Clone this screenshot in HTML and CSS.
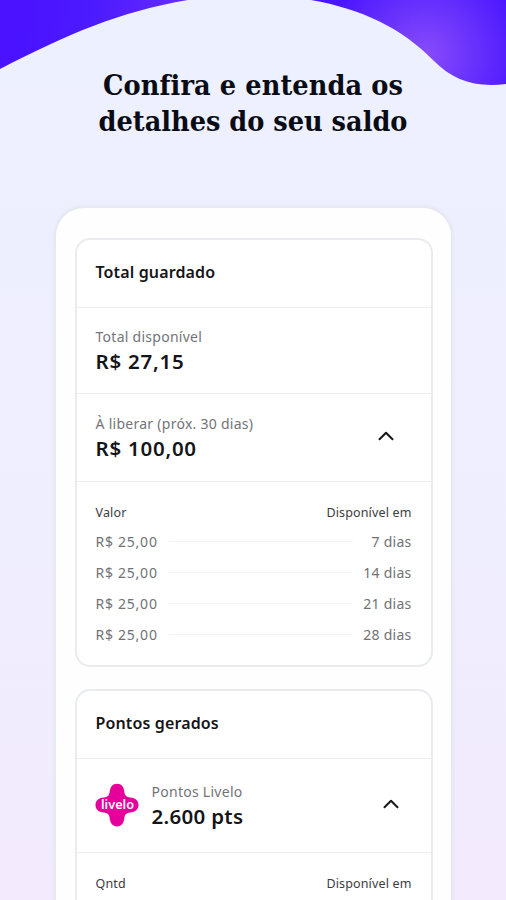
FILE: index.html
```html
<!DOCTYPE html>
<html lang="pt-BR">
<head>
<meta charset="utf-8">
<title>Detalhes do saldo</title>
<link rel="stylesheet" href="styles.css">
</head>
<body>
<svg class="wave" viewBox="0 0 506 90" aria-hidden="true">
  <defs>
    <linearGradient id="left" gradientUnits="userSpaceOnUse" x1="20" y1="0" x2="188" y2="30">
      <stop offset="0" stop-color="#4a12ff"/><stop offset=".45" stop-color="#4c1bff"/><stop offset="1" stop-color="#692dff"/>
    </linearGradient>
    <radialGradient id="right" gradientUnits="userSpaceOnUse" cx="425" cy="55" r="100">
      <stop offset="0" stop-color="#884cfb"/><stop offset=".45" stop-color="#6b34fc"/><stop offset="1" stop-color="#4916ff"/>
    </radialGradient>
  </defs>
  <path fill="url(#left)" d="M0 0H188C118 12 68 34 0 69Z"/>
  <path fill="url(#right)" d="M311 0H506V84C475 88 453 80 434 61C402 28 362 9 311 0Z"/>
</svg>
<h1 class="title"><span class="title-a">Confira e entenda os</span><br><span class="title-b">detalhes do seu saldo</span></h1>
<main class="panel">
  <section class="card">
    <h2 class="card-head">Total guardado</h2>
    <div class="row available">
      <div><p class="label">Total disponível</p><p class="amount">R$ 27,15</p></div>
    </div>
    <div class="row pending">
      <div><p class="label">À liberar (próx. 30 dias)</p><p class="amount">R$ 100,00</p></div>
      <svg class="chevron" viewBox="0 0 16 10"><path d="M1.500 8.200 8 1.800l6.500 6.400"/></svg>
    </div>
    <div class="table">
      <div class="thead"><span>Valor</span><span>Disponível em</span></div>
      <div class="item"><span class="value">R$ 25,00</span><i></i><span class="days">7 dias</span></div>
      <div class="item"><span class="value">R$ 25,00</span><i></i><span class="days">14 dias</span></div>
      <div class="item"><span class="value">R$ 25,00</span><i></i><span class="days">21 dias</span></div>
      <div class="item"><span class="value">R$ 25,00</span><i></i><span class="days">28 dias</span></div>
    </div>
  </section>
  <section class="card points">
    <h2 class="card-head">Pontos gerados</h2>
    <div class="row livelo">
      <svg class="logo" viewBox="0 0 44 44">
        <path d="M14.500 10C15 4 17.500 .8 22 .8S29 4 29.500 10C30 13 32 14.200 35 14.500C41 15 43.500 18 43.500 22S41 29 35 29.500C32 29.800 30 31 29.500 34C29 40 26.500 43.500 22 43.500S15 40 14.500 34C14 31 12 29.800 9 29.500C3 29 .5 26 .5 22S3 15 9 14.500C12 14.200 14 13 14.500 10Z"/>
        <text x="22.500" y="26.300" text-anchor="middle" textLength="33" lengthAdjust="spacingAndGlyphs">livelo</text>
      </svg>
      <div class="info"><p class="label">Pontos Livelo</p><p class="amount">2.600 pts</p></div>
      <svg class="chevron" viewBox="0 0 16 10"><path d="M1.500 8.200 8 1.800l6.500 6.400"/></svg>
    </div>
    <div class="table">
      <div class="thead"><span>Qntd</span><span>Disponível em</span></div>
    </div>
  </section>
</main>
</body>
</html>
```
FILE: styles.css
```css
* { box-sizing: border-box; }
body {
  margin: 0; height: 900px; overflow: hidden; position: relative;
  display: flex; flex-direction: column; align-items: center;
  background: linear-gradient(#edf1ff 0, #eeeffe 25%, #efeefe 60%, #f3eafd 100%);
  font-family: "Noto Sans", "Open Sans", sans-serif; color: #151519;
}
h1, h2, p { margin: 0; }
.wave { position: absolute; top: 0; left: 0; width: 506px; height: 90px; }
.title {
  flex: none; position: relative; padding-top: 67px; height: 208px; text-align: center; white-space: nowrap;
  font: bold 28.500px/36px "DejaVu Serif Condensed", "DejaVu Serif", serif; font-stretch: condensed; color: #090c14;
}
.title-a { letter-spacing: .1px; }
.title-b { letter-spacing: 0; }
.panel {
  flex: none; width: 395px; height: 692px; padding: 30px 18px 0 19px; display: flex; flex-direction: column;
  background: #fefefe; border-radius: 28px 28px 0 0; box-shadow: 0 0 2px 3px #e7e9f2;
}
.card { flex: none; border: 2px solid #e9ebee; border-radius: 15px; height: 429px; background: #fff; }
.points { margin-top: 22px; height: 211px; border-bottom: 0; border-radius: 15px 15px 0 0; }
.card-head { height: 68px; display: flex; align-items: center; padding: 0 0 3px 19px; font-size: 16px; line-height: 22px; font-weight: 600; letter-spacing: .13px; border-bottom: 1px solid #eceef0; }
.row { display: flex; padding-left: 19px; border-bottom: 1px solid #eceef0; }
.available { height: 86px; padding-top: 18px; }
.pending { height: 88px; padding-top: 19px; justify-content: space-between; }
.label { font-size: 14px; line-height: 22px; color: #737478; letter-spacing: .27px; }
.amount { font-size: 20.500px; line-height: 26px; font-weight: 600; letter-spacing: .75px; }
.chevron { width: 16px; height: 10px; fill: none; stroke: #17171a; stroke-width: 2; stroke-linecap: round; stroke-linejoin: round; margin: 18px 37px 0 0; }
.table { padding: 21px 19px 0; }
.thead { display: flex; justify-content: space-between; font-size: 12.500px; line-height: 20px; color: #3c3c40; letter-spacing: .15px; margin-bottom: 3px; }
.item { display: flex; align-items: center; height: 31px; font-size: 14px; color: #717276; }
.value { letter-spacing: .75px; }
.item i { flex: 1; height: 1px; background: #f2f3f4; margin: 0 11px; }
.days { min-width: 48px; text-align: right; letter-spacing: .25px; }
.livelo { height: 94px; padding-top: 22px; }
.logo { width: 44px; height: 44px; margin: 2px 0 0 -1px; fill: #e6009b; }
.logo text { fill: #fff; font: 600 13px "Noto Sans", sans-serif; }
.info { flex: 1; margin-left: 13px; }
.livelo .amount { letter-spacing: .3px; }
.livelo .chevron { margin: 18px 32px 0 0; }
```
